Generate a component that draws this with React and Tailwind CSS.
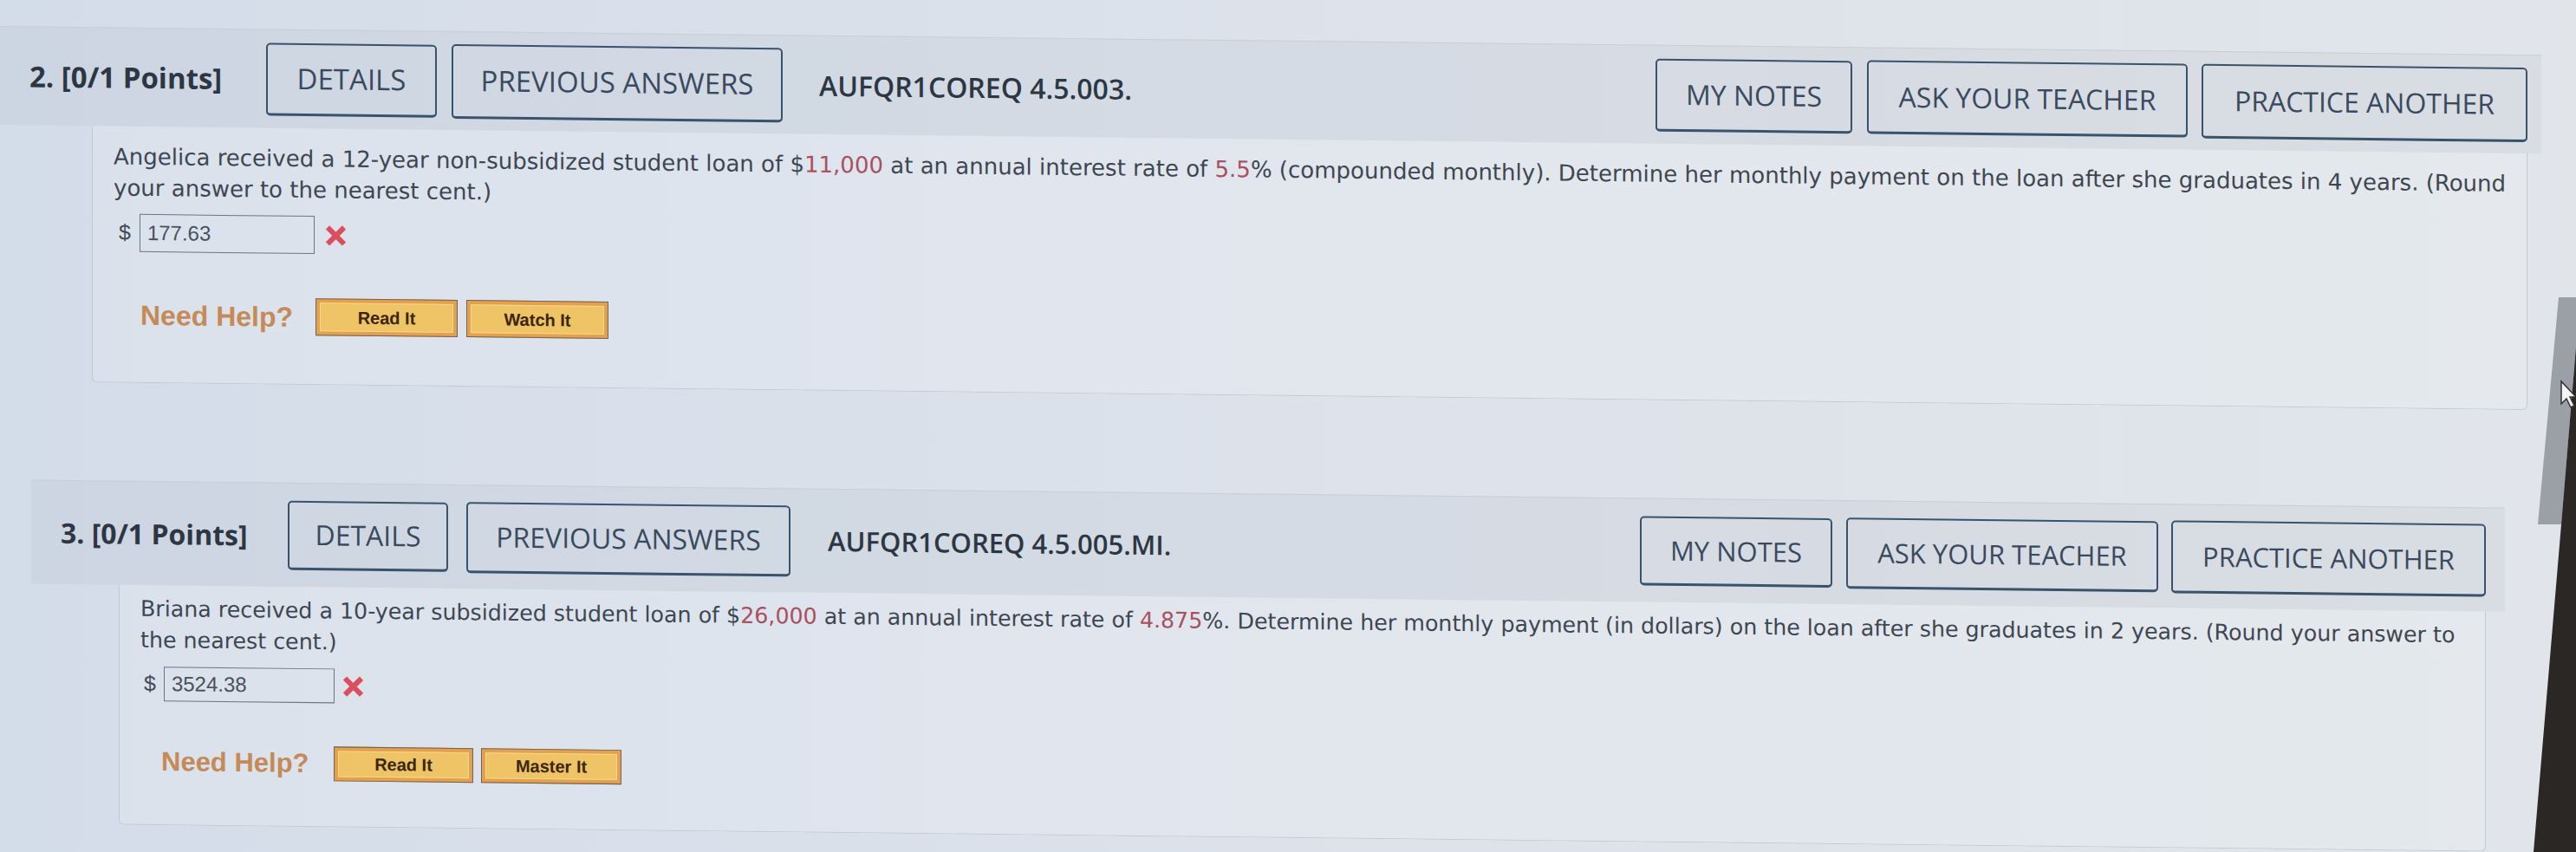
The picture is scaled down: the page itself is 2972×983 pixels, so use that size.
import React from "react";

function HBtn({ className, children }) {
  return (
    <div
      className={`flex shrink-0 items-center justify-center whitespace-nowrap rounded-[5px] border-2 border-b-[3px] border-[#3a536d] text-[#3a4a5e] ${className}`}
    >
      {children}
    </div>
  );
}

function R({ children }) {
  return <span className="text-[#a9505f]">{children}</span>;
}

function XMark({ className }) {
  return (
    <svg className={className} width="27" height="25" viewBox="0 0 27 25">
      <path d="M4 3 L23 22 M23 3 L4 22" stroke="#d94f5f" strokeWidth="6" strokeLinecap="butt" />
    </svg>
  );
}

function HelpBtn({ className, children }) {
  return (
    <div className={`shrink-0 border border-[#6b655a] bg-[#e4a04e] p-[4px] ${className}`}>
      <div className="flex h-full items-center justify-center border border-[#f6d88c] bg-[#eec466] font-['Liberation_Sans',sans-serif] text-[20px] font-bold text-[#3b2610]">
        {children}
      </div>
    </div>
  );
}

export default function App() {
  return (
    <div className="relative h-[983px] w-[2972px] overflow-hidden bg-[linear-gradient(90deg,#d3dce9_0%,#dce2eb_45%,#e1e5ea_100%)]">
      <div className="origin-top-left pt-[30px] [transform:skewY(0.65deg)]">
        {/* Question 2 header */}
        <div className="flex h-[114px] w-[2932px] items-center border-t border-[#c9cfd6] bg-[#8f9aa7]/10 pl-[34px] pr-[16px] font-['Open_Sans',sans-serif]">
          <span className="w-[273px] shrink-0 whitespace-nowrap text-[33px] font-bold text-[#2d3743]">2. [0/1 Points]</span>
          <HBtn className="h-[84px] w-[197px] text-[33px]">DETAILS</HBtn>
          <HBtn className="ml-[17px] h-[86px] w-[382px] text-[33px]">PREVIOUS ANSWERS</HBtn>
          <span className="ml-[42px] whitespace-nowrap text-[32px] font-semibold text-[#2d3743]">AUFQR1COREQ 4.5.003.</span>
          <div className="flex-1" />
          <HBtn className="h-[84px] w-[227px] text-[32px]">MY NOTES</HBtn>
          <HBtn className="ml-[17px] h-[85px] w-[370px] text-[32px]">ASK YOUR TEACHER</HBtn>
          <HBtn className="ml-[16px] h-[86px] w-[376px] text-[32px]">PRACTICE ANOTHER</HBtn>
        </div>
        {/* Question 2 body */}
        <div className="ml-[106px] h-[296px] w-[2810px] rounded-b-[6px] border border-t-0 border-[#c3cad3] bg-white/15 pl-[24px] pt-[17px] font-['DejaVu_Sans',sans-serif] text-[26px] text-[#3e4751]">
          <div className="whitespace-nowrap leading-[36px]">
            Angelica received a 12-year non-subsidized student loan of $<R>11,000</R> at an annual interest rate of <R>5.5</R>% (compounded monthly). Determine her monthly payment on the loan after she graduates in 4 years. (Round
          </div>
          <div className="whitespace-nowrap leading-[36px]">your answer to the nearest cent.)</div>
          <div className="ml-[6px] mt-[12px] flex items-center">
            <span className="font-['Liberation_Sans',sans-serif] text-[25px] text-[#444b54]">$</span>
            <div className="ml-[10px] flex h-[44px] w-[202px] items-center border border-[#6d7580] pl-[8px] font-['Liberation_Sans',sans-serif] text-[24px] text-[#4a515a]">
              177.63
            </div>
            <XMark className="ml-[11px]" />
          </div>
          <div className="ml-[31px] mt-[51px] flex h-[43px] items-center">
            <span className="w-[202px] shrink-0 whitespace-nowrap font-['Liberation_Sans',sans-serif] text-[32px] font-bold text-[#c58a57]">Need Help?</span>
            <HelpBtn className="h-[43px] w-[164px]">Read It</HelpBtn>
            <HelpBtn className="ml-[10px] h-[43px] w-[164px]">Watch It</HelpBtn>
          </div>
        </div>

        {/* Question 3 header */}
        <div className="ml-[36px] mt-[113px] flex h-[120px] w-[2854px] items-center border-t border-[#c9cfd6] bg-[#8f9aa7]/10 pl-[34px] pr-[22px] font-['Open_Sans',sans-serif]">
          <span className="w-[262px] shrink-0 whitespace-nowrap text-[32px] font-bold text-[#2d3743]">3. [0/1 Points]</span>
          <HBtn className="h-[80px] w-[185px] text-[32px]">DETAILS</HBtn>
          <HBtn className="ml-[21px] h-[82px] w-[374px] text-[32px]">PREVIOUS ANSWERS</HBtn>
          <span className="ml-[43px] whitespace-nowrap text-[31px] font-semibold text-[#2d3743]">AUFQR1COREQ 4.5.005.MI.</span>
          <div className="flex-1" />
          <HBtn className="h-[80px] w-[222px] text-[31px]">MY NOTES</HBtn>
          <HBtn className="ml-[16px] h-[82px] w-[360px] text-[31px]">ASK YOUR TEACHER</HBtn>
          <HBtn className="ml-[15px] h-[84px] w-[363px] text-[31px]">PRACTICE ANOTHER</HBtn>
        </div>
        {/* Question 3 body */}
        <div className="ml-[137px] h-[277px] w-[2731px] rounded-b-[6px] border border-t-0 border-[#c3cad3] bg-white/15 pl-[24px] pt-[10px] font-['DejaVu_Sans',sans-serif] text-[25.3px] text-[#3e4751]">
          <div className="whitespace-nowrap leading-[36px]">
            Briana received a 10-year subsidized student loan of $<R>26,000</R> at an annual interest rate of <R>4.875</R>%. Determine her monthly payment (in dollars) on the loan after she graduates in 2 years. (Round your answer to
          </div>
          <div className="whitespace-nowrap leading-[36px]">the nearest cent.)</div>
          <div className="ml-[4px] mt-[12px] flex items-center">
            <span className="font-['Liberation_Sans',sans-serif] text-[25px] text-[#444b54]">$</span>
            <div className="ml-[9px] flex h-[40px] w-[197px] items-center border border-[#6d7580] pl-[8px] font-['Liberation_Sans',sans-serif] text-[24px] text-[#4a515a]">
              3524.38
            </div>
            <XMark className="ml-[8px]" />
          </div>
          <div className="ml-[24px] mt-[50px] flex h-[40px] items-center">
            <span className="w-[199px] shrink-0 whitespace-nowrap font-['Liberation_Sans',sans-serif] text-[31px] font-bold text-[#c58a57]">Need Help?</span>
            <HelpBtn className="h-[40px] w-[161px]">Read It</HelpBtn>
            <HelpBtn className="ml-[9px] h-[40px] w-[162px]">Master It</HelpBtn>
          </div>
        </div>
      </div>

      {/* scrollbar thumb, screen bezel and pointer */}
      <svg className="absolute left-0 top-0" width="2972" height="983" viewBox="0 0 2972 983">
        <polygon points="2952,343 2972,343 2972,400 2955,605 2928,605" fill="#9aa0a6" />
        <polygon points="2972,400 2972,983 2923,983 2955,605" fill="#2b2724" />
        <path d="M2955 440 L2955 466 L2961 460 L2966 470 L2970 468 L2965 458 L2972 458 Z" fill="#f4f4f4" stroke="#333" strokeWidth="1.5" />
      </svg>
    </div>
  );
}
